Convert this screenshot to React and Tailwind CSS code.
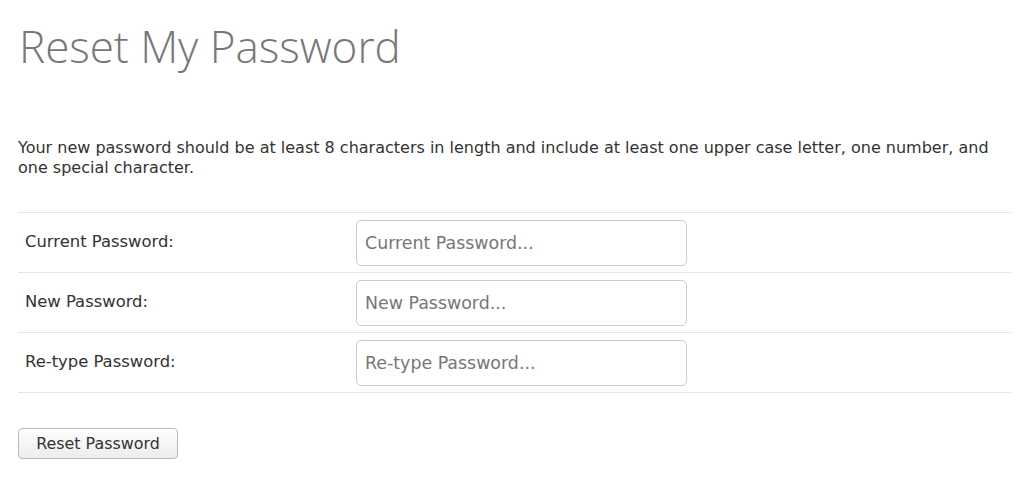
export default function App() {
  const rows = [
    ["Current Password:", "Current Password..."],
    ["New Password:", "New Password..."],
    ["Re-type Password:", "Re-type Password..."],
  ];
  return (
    <div className="min-h-[482px] bg-white px-[18px] pt-[20px] text-[#333]" style={{ fontFamily: '"DejaVu Sans", Verdana, sans-serif' }}>
      <h1 className="pl-[1px] text-[44px] font-light leading-[52px] text-[#777]" style={{ fontFamily: '"Open Sans", sans-serif' }}>
        Reset My Password
      </h1>
      <p className="mt-[66px] w-[990px] text-[16px] leading-[20px]">
        Your new password should be at least 8 characters in length and include at least one upper case letter, one number, and one special character.
      </p>
      <div className="mt-[34px] w-[993px] border-t border-[#e5e5e5]">
        {rows.map(([label, ph]) => (
          <div key={label} className="flex h-[60px] items-center border-b border-[#e5e5e5]">
            <div className="w-[338px] pl-[7px] text-[16.4px]">{label}</div>
            <input
              type="password"
              placeholder={ph}
              className="h-[46px] w-[331px] rounded-[5px] border border-[#ccc] px-[8px] text-[17.4px] placeholder:text-[#777] outline-none"
            />
          </div>
        ))}
      </div>
      <button className="mt-[35px] h-[31px] w-[160px] rounded-[4px] border border-[#bbb] bg-gradient-to-b from-white to-[#ececec] text-[15.9px] text-[#333]">
        Reset Password
      </button>
    </div>
  );
}
